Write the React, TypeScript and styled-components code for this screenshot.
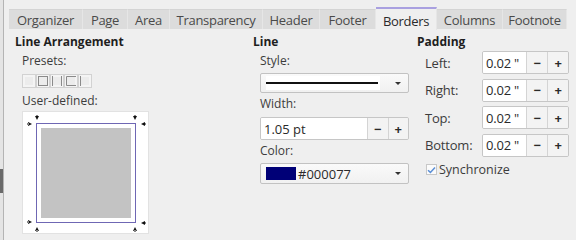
import styled, { createGlobalStyle } from "styled-components";

const GlobalStyle = createGlobalStyle`
  html, body {
    margin: 0;
    padding: 0;
    background: #efefef;
  }
  body {
    font-family: "Open Sans", "Noto Sans", sans-serif;
    font-size: 12px;
    color: #3c3c3c;
  }
`;

const tabs = [
  { label: "Organizer", width: 74 },
  { label: "Page", width: 45 },
  { label: "Area", width: 42 },
  { label: "Transparency", width: 93 },
  { label: "Header", width: 57 },
  { label: "Footer", width: 56 },
  { label: "Borders", width: 61, active: true },
  { label: "Columns", width: 66 },
  { label: "Footnote", width: 64 },
];

export default function App() {
  return (
    <>
      <GlobalStyle />
      <Window>
        <SideStrip>
          <StripThumb />
        </SideStrip>
        <Main>
          <TabBar>
            {tabs.map((t) => (
              <Tab key={t.label} $w={t.width} $active={!!t.active}>
                {t.label}
              </Tab>
            ))}
          </TabBar>
          <Body>
            <Column>
              <Heading>Line Arrangement</Heading>
              <Indented>
                <Label>Presets:</Label>
                <Presets>
                  {[0, 1, 2, 3, 4].map((i) => (
                    <PresetIcon key={i} kind={i} />
                  ))}
                </Presets>
                <Label $top={3} $bottom={2}>User-defined:</Label>
                <Preview>
                  <PreviewMarks />
                  <PreviewFrame>
                    <PreviewFill />
                  </PreviewFrame>
                </Preview>
              </Indented>
            </Column>

            <Column>
              <Heading>Line</Heading>
              <Indented>
                <Label>Style:</Label>
                <Dropdown>
                  <LineSample>
                    <span />
                  </LineSample>
                  <Caret />
                </Dropdown>
                <Label $top={3} $bottom={5}>Width:</Label>
                <Spin $w={149} $field={106}>
                  <Field>1.05 pt</Field>
                  <StepButton>−</StepButton>
                  <StepButton>+</StepButton>
                </Spin>
                <Label>Color:</Label>
                <Dropdown $h={21}>
                  <Swatch />
                  <SwatchText>#000077</SwatchText>
                  <Caret />
                </Dropdown>
              </Indented>
            </Column>

            <Column>
              <Heading>Padding</Heading>
              <PaddingGrid>
                {["Left:", "Right:", "Top:", "Bottom:"].map((l) => (
                  <PadRow key={l}>
                    <PadLabel>{l}</PadLabel>
                    <Spin $w={87} $field={43}>
                      <Field>0.02 "</Field>
                      <StepButton>−</StepButton>
                      <StepButton>+</StepButton>
                    </Spin>
                  </PadRow>
                ))}
              </PaddingGrid>
              <CheckRow>
                <CheckBox>
                  <svg width="9" height="8" viewBox="0 0 9 8">
                    <path d="M1 4.2 L3.4 6.4 L8 1.4" fill="none" stroke="#5b8fd6" strokeWidth="1.5" />
                  </svg>
                </CheckBox>
                Synchronize
              </CheckRow>
            </Column>
          </Body>
        </Main>
      </Window>
    </>
  );
}

function PresetIcon({ kind }: { kind: number }) {
  const dark = "#8a8a8a";
  return (
    <PresetBox>
      <svg width="14" height="14" viewBox="0 0 14 14">
        <rect x="0.5" y="0.5" width="13" height="13" fill="#f4f4f4" stroke="#d2d2d2" />
        <rect x="3" y="3" width="8" height="8" fill="#ececec" stroke="none" />
        {kind === 1 && <rect x="2.5" y="2.5" width="9" height="9" fill="none" stroke={dark} />}
        {kind === 2 && <path d="M2.5 2 V12 M11.5 2 V12" stroke={dark} fill="none" />}
        {kind === 3 && <path d="M12 2.5 H2.5 V11.5 H12" stroke={dark} fill="none" />}
        {kind === 4 && <path d="M2.5 2 V12" stroke={dark} fill="none" />}
      </svg>
    </PresetBox>
  );
}

function PreviewMarks() {
  // little arrow marks around the corners of the preview
  const marks: [number, number, string][] = [
    [14, 6, "down"],
    [7, 12, "right"],
    [112, 6, "down"],
    [120, 12, "left"],
    [7, 110, "right"],
    [14, 117, "up"],
    [120, 111, "left"],
    [112, 117, "up"],
  ];
  const shape = (x: number, y: number, d: string) => {
    switch (d) {
      case "down":
        return `M${x - 2} ${y - 2} H${x + 2} L${x} ${y + 2} Z M${x - 0.5} ${y - 3} h1 v2 h-1 Z`;
      case "up":
        return `M${x - 2} ${y + 2} H${x + 2} L${x} ${y - 2} Z M${x - 0.5} ${y + 1} h1 v2 h-1 Z`;
      case "right":
        return `M${x - 2} ${y - 2} V${y + 2} L${x + 2} ${y} Z M${x - 3} ${y - 0.5} h2 v1 h-2 Z`;
      default:
        return `M${x + 2} ${y - 2} V${y + 2} L${x - 2} ${y} Z M${x + 1} ${y - 0.5} h2 v1 h-2 Z`;
    }
  };
  return (
    <MarkLayer width="127" height="123" viewBox="0 0 127 123">
      {marks.map(([x, y, d], i) => (
        <path key={i} d={shape(x, y, d)} fill="#111" />
      ))}
    </MarkLayer>
  );
}

const Window = styled.div`
  display: flex;
  width: 576px;
  height: 240px;
  overflow: hidden;
`;

const SideStrip = styled.div`
  width: 3px;
  background: #e4e4e4;
  border-right: 1px solid #b4b4b4;
  display: flex;
  flex-direction: column;
  padding-top: 169px;
`;

const StripThumb = styled.div`
  height: 24px;
  background: #6a6a6a;
`;

const Main = styled.div`
  flex: 1;
  display: flex;
  flex-direction: column;
  padding-left: 5px;
`;

const TabBar = styled.div`
  display: flex;
  align-items: flex-end;
  height: 29px;
  border-bottom: 1px solid transparent;
`;

const Tab = styled.div<{ $w: number; $active: boolean }>`
  width: ${(p) => p.$w}px;
  box-sizing: border-box;
  height: ${(p) => (p.$active ? 23 : 20)}px;
  display: flex;
  align-items: center;
  justify-content: center;
  padding-top: ${(p) => (p.$active ? 2 : 0)}px;
  background: ${(p) => (p.$active ? "#efefef" : "#dcdcdc")};
  border-top: ${(p) => (p.$active ? "2px solid #a9a0e0" : "1px solid #d4d4d4")};
  border-right: 1px solid #e6e6e6;
  color: ${(p) => (p.$active ? "#2a2a2a" : "#4a4a4a")};
  font-size: 13px;
  letter-spacing: -0.3px;
  white-space: nowrap;
  margin-bottom: ${(p) => (p.$active ? -1 : 0)}px;
`;

const Body = styled.div`
  display: grid;
  grid-template-columns: 238px 164px 1fr;
  padding: 4px 0 0 6px;
`;

const Column = styled.div`
  display: flex;
  flex-direction: column;
`;

const Heading = styled.div`
  font-weight: 700;
  color: #1e1e1e;
  line-height: 16px;
`;

const Indented = styled.div`
  display: flex;
  flex-direction: column;
  align-items: flex-start;
  padding-left: 7px;
`;

const Label = styled.div<{ $top?: number; $bottom?: number }>`
  line-height: 16px;
  margin-top: ${(p) => p.$top ?? 3}px;
  margin-bottom: ${(p) => p.$bottom ?? 4}px;
`;

const Presets = styled.div`
  display: flex;
  margin: 1px 0 2px;
`;

const PresetBox = styled.div`
  width: 14px;
  height: 14px;
  display: flex;
`;

const Preview = styled.div`
  position: relative;
  width: 127px;
  height: 123px;
  background: #ffffff;
  border: 1px solid #e2e2e2;
  box-sizing: border-box;
  display: flex;
  align-items: flex-start;
  padding: 11px 0 0 13px;
`;

const MarkLayer = styled.svg`
  position: absolute;
  left: 0;
  top: 0;
`;

const PreviewFrame = styled.div`
  width: 100px;
  height: 100px;
  box-sizing: border-box;
  border: 1px solid #6f67b4;
  padding: 4px;
  display: flex;
`;

const PreviewFill = styled.div`
  flex: 1;
  background: #c3c3c3;
`;

const Dropdown = styled.div<{ $h?: number }>`
  width: 149px;
  height: ${(p) => p.$h ?? 20}px;
  box-sizing: border-box;
  border: 1px solid #c2c2c2;
  border-radius: 2px;
  background: linear-gradient(#fafafa, #f1f1f1);
  display: flex;
  align-items: center;
  padding: 0 5px;
  gap: 2px;
`;

const LineSample = styled.div`
  width: 114px;
  height: 14px;
  background: #ffffff;
  display: flex;
  align-items: center;
  span {
    display: block;
    width: 112px;
    height: 2px;
    background: #111;
  }
`;

const Caret = styled.div`
  margin-left: auto;
  margin-right: 2px;
  width: 0;
  height: 0;
  border-left: 3px solid transparent;
  border-right: 3px solid transparent;
  border-top: 3px solid #333;
`;

const Swatch = styled.div`
  width: 30px;
  height: 13px;
  background: #000077;
`;

const SwatchText = styled.span`
  color: #2a2a2a;
  font-size: 13px;
`;

const Spin = styled.div<{ $w: number; $field: number }>`
  width: ${(p) => p.$w}px;
  height: 23px;
  box-sizing: border-box;
  display: grid;
  grid-template-columns: ${(p) => p.$field}px 1fr 1fr;
  border: 1px solid #c6c6c6;
  border-radius: 2px;
  overflow: hidden;
`;

const Field = styled.div`
  background: #ffffff;
  display: flex;
  align-items: center;
  padding-left: 3px;
  color: #2a2a2a;
  font-size: 13px;
  white-space: nowrap;
`;

const StepButton = styled.div`
  background: #f3f3f3;
  border-left: 1px solid #d4d4d4;
  display: flex;
  align-items: center;
  justify-content: center;
  font-weight: 700;
  font-size: 13px;
  color: #2a2a2a;
`;

const PaddingGrid = styled.div`
  display: flex;
  flex-direction: column;
  gap: 4.5px;
  margin-top: 1px;
`;

const PadRow = styled.div`
  display: flex;
  align-items: center;
  padding-left: 8px;
  font-size: 13px;
  letter-spacing: -0.2px;
`;

const PadLabel = styled.div`
  width: 57px;
`;

const CheckRow = styled.div`
  display: flex;
  align-items: center;
  gap: 2px;
  margin-top: 4px;
  padding-left: 9px;
  line-height: 18px;
  font-size: 12.5px;
`;

const CheckBox = styled.div`
  width: 11px;
  height: 11px;
  box-sizing: border-box;
  border: 1px solid #c8c8c8;
  background: #fbfbfb;
  display: flex;
  align-items: center;
  justify-content: center;
`;
